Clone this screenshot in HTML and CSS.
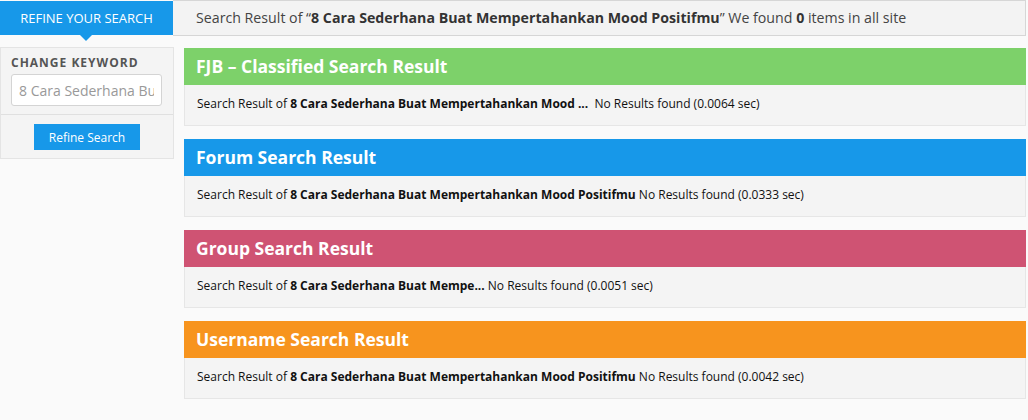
FILE: index.html
```html
<!DOCTYPE html>
<html lang="en">
<head>
  <meta charset="UTF-8">
  <title>Search Result</title>
  <link rel="stylesheet" href="styles.css">
</head>
<body>

<div class="top-bar">
  <div class="refine-tab">REFINE YOUR SEARCH</div>
  <div class="result-summary">
    Search Result of &ldquo;<b>8 Cara Sederhana Buat Mempertahankan Mood Positifmu</b>&rdquo; We found <b>0</b> items in all site
  </div>
</div>

<div class="page-wrap">
  <!-- Sidebar -->
  <div class="sidebar">
    <div class="sidebar-section">
      <div class="sidebar-label">CHANGE KEYWORD</div>
      <input type="text" class="keyword-input" value="8 Cara Sederhana Buat Mempertahankan Mood Positifmu">
    </div>
    <div class="sidebar-action">
      <button class="btn-refine">Refine Search</button>
    </div>
  </div>

  <!-- Results -->
  <div class="results">
    <div class="result-panel">
      <div class="panel-head head-fjb">FJB &ndash; Classified Search Result</div>
      <div class="panel-body">Search Result of <b>8 Cara Sederhana Buat Mempertahankan Mood ...</b>&nbsp; No Results found (0.0064 sec)</div>
    </div>
    <div class="result-panel">
      <div class="panel-head head-forum">Forum Search Result</div>
      <div class="panel-body">Search Result of <b>8 Cara Sederhana Buat Mempertahankan Mood Positifmu</b> No Results found (0.0333 sec)</div>
    </div>
    <div class="result-panel">
      <div class="panel-head head-group">Group Search Result</div>
      <div class="panel-body">Search Result of <b>8 Cara Sederhana Buat Mempe...</b> No Results found (0.0051 sec)</div>
    </div>
    <div class="result-panel">
      <div class="panel-head head-user">Username Search Result</div>
      <div class="panel-body">Search Result of <b>8 Cara Sederhana Buat Mempertahankan Mood Positifmu</b> No Results found (0.0042 sec)</div>
    </div>
  </div>
</div>

</body>
</html>
```

FILE: styles.css
```css
body {
  margin: 0;
  background: #fafafa;
  font-family: "Open Sans", "Liberation Sans", sans-serif;
  color: #333;
}
.top-bar {
  display: flex;
  width: 1026px;
  height: 36px;
}
.refine-tab {
  position: relative;
  width: 173px;
  margin-top: 1px;
  height: 34px;
  background: #1798e9;
  color: #fff;
  font-size: 13px;
  line-height: 34px;
  text-align: center;
}
.refine-tab::after {
  content: "";
  position: absolute;
  left: 80px;
  bottom: -6px;
  border-left: 6px solid transparent;
  border-right: 6px solid transparent;
  border-top: 6px solid #1798e9;
}
.result-summary {
  flex: 1;
  background: #f3f3f3;
  border: 1px solid #d6d6d6;
  border-left: none;
  padding-left: 23px;
  font-size: 14.2px;
  line-height: 34px;
  color: #444;
}
.result-summary b {
  color: #333;
}
.page-wrap {
  display: flex;
  align-items: flex-start;
  gap: 10px;
  width: 1026px;
  margin-top: 11px;
}
.sidebar {
  width: 172px;
  background: #f4f4f4;
  border: 1px solid #e4e4e4;
}
.sidebar-section {
  padding: 6px 10px 8px;
  border-bottom: 1px solid #e0e0e0;
}
.sidebar-label {
  font-size: 12px;
  font-weight: bold;
  letter-spacing: 1px;
  color: #555;
  margin-bottom: 3px;
}
.keyword-input {
  box-sizing: border-box;
  width: 151px;
  height: 32px;
  padding: 0 7px;
  border: 1px solid #d4d4d4;
  border-radius: 3px;
  background: #fff;
  font-family: inherit;
  font-size: 14px;
  color: #999;
}
.sidebar-action {
  padding: 9px 0 8px;
  text-align: center;
}
.btn-refine {
  width: 106px;
  height: 26px;
  border: none;
  background: #1798e9;
  color: #fff;
  font-family: inherit;
  font-size: 12px;
  cursor: pointer;
}
.results {
  flex: 1;
  display: flex;
  flex-direction: column;
  gap: 13px;
  padding-top: 1px;
}
.result-panel {
  border: 1px solid #e6e6e6;
  background: #f4f4f4;
}
.panel-head {
  height: 37px;
  line-height: 37px;
  padding-left: 12px;
  font-size: 17.5px;
  font-weight: bold;
  color: #fff;
  margin: -1px -1px 0;
}
.head-fjb { background: #7dd16a; }
.head-forum { background: #1798e9; }
.head-group { background: #cf5373; }
.head-user { background: #f7941e; }
.panel-body {
  height: 40px;
  line-height: 38px;
  padding-left: 12px;
  font-size: 12px;
  color: #111;
}
```
